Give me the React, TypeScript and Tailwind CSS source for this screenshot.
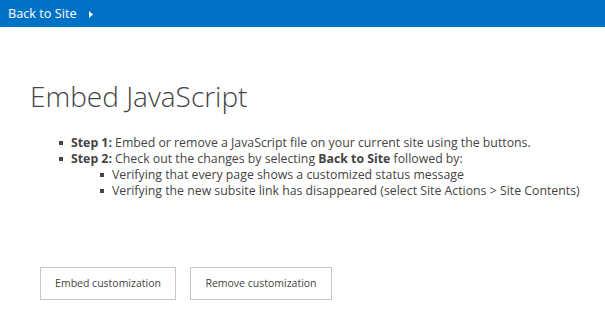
export default function App() {
  return (
    <div className="w-[605px] h-[314px] bg-white text-[#444] font-['Open_Sans',sans-serif] overflow-hidden">
      <div className="h-[27px] bg-[#0072c6] flex items-center pl-2 gap-[12px]">
        <span className="text-white text-[12.7px] leading-none">Back to Site</span>
        <svg width="4" height="7" viewBox="0 0 4 7" className="mt-px">
          <path d="M0 0 L4 3.5 L0 7 Z" fill="#fff" />
        </svg>
      </div>

      <div className="pl-[30px] pt-[51px]">
        <h1 className="text-[28px] font-light leading-[36px] text-[#444]">Embed JavaScript</h1>

        <ul className="mt-[21px] ml-[29px] text-[12.3px] leading-[16px]">
          <li className="flex items-start gap-[8px]">
            <span className="mt-[6px] w-[4px] h-[4px] bg-[#444] shrink-0" />
            <span>
              <b>Step 1:</b> Embed or remove a JavaScript file on your current site using the buttons.
            </span>
          </li>
          <li className="flex items-start gap-[8px]">
            <span className="mt-[6px] w-[4px] h-[4px] bg-[#444] shrink-0" />
            <div>
              <span>
                <b>Step 2:</b> Check out the changes by selecting <b>Back to Site</b> followed by:
              </span>
              <ul className="ml-[29px]">
                <li className="flex items-start gap-[8px]">
                  <span className="mt-[6px] w-[4px] h-[4px] bg-[#444] shrink-0" />
                  <span>Verifying that every page shows a customized status message</span>
                </li>
                <li className="flex items-start gap-[8px]">
                  <span className="mt-[6px] w-[4px] h-[4px] bg-[#444] shrink-0" />
                  <span className="whitespace-nowrap">
                    Verifying the new subsite link has disappeared (select Site Actions &gt; Site Contents)
                  </span>
                </li>
              </ul>
            </div>
          </li>
        </ul>

        <div className="mt-[68px] ml-[10px] flex gap-[14px]">
          <button className="h-[33px] w-[136px] border border-[#c6c6c6] bg-white text-[10.5px] text-[#444]">
            Embed customization
          </button>
          <button className="h-[33px] w-[142px] border border-[#c6c6c6] bg-white text-[10.5px] text-[#444]">
            Remove customization
          </button>
        </div>
      </div>
    </div>
  );
}
